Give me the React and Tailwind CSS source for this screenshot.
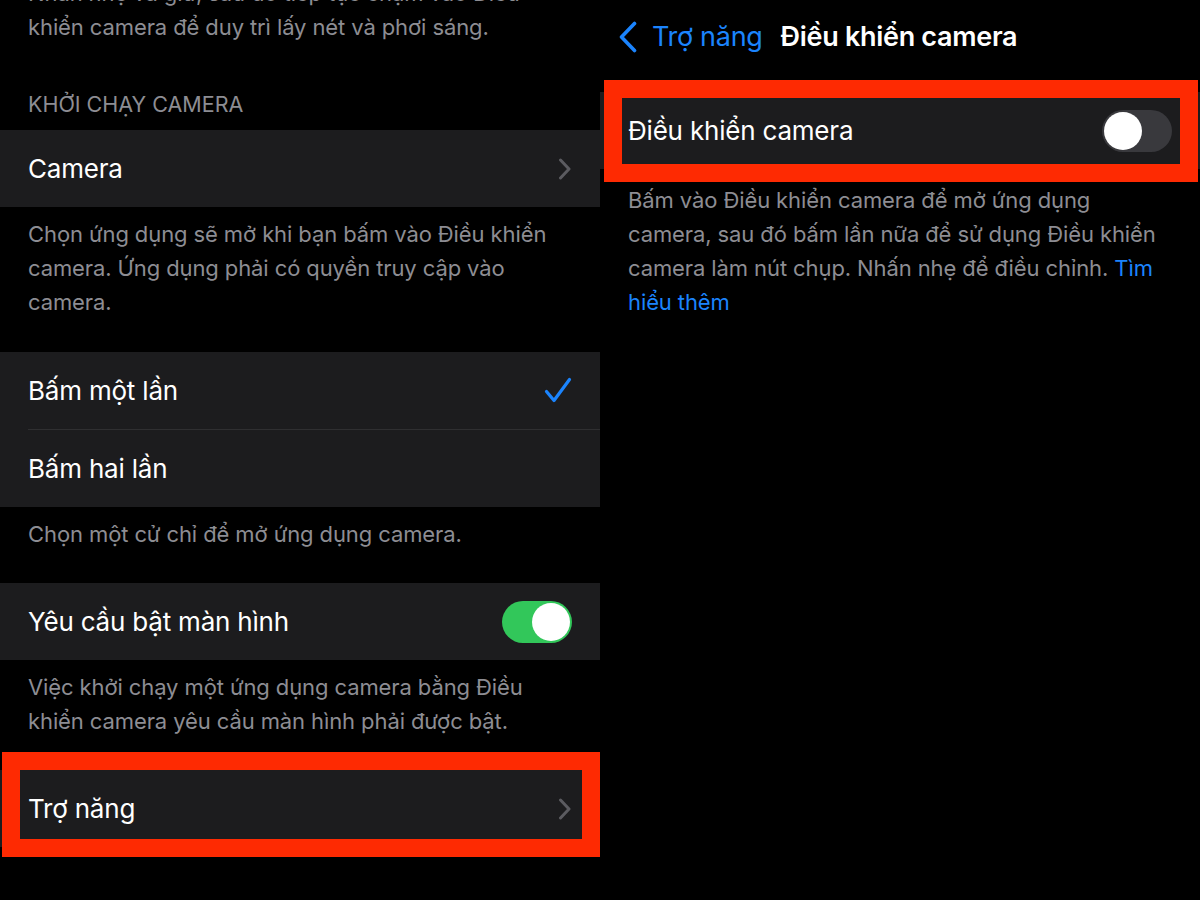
import React from "react";

const font = { fontFamily: "Inter, 'Noto Sans', sans-serif" };

function Chevron() {
  return (
    <svg width="14" height="22" viewBox="0 0 14 22" className="shrink-0">
      <path d="M2.5 2 L11 11 L2.5 20" fill="none" stroke="#5b5b60" strokeWidth="3" strokeLinecap="round" strokeLinejoin="round" />
    </svg>
  );
}

function Check() {
  return (
    <svg width="28" height="27" viewBox="0 0 28 27" className="shrink-0">
      <path d="M2.5 14.5 L10 23.5 L25.5 2.5" fill="none" stroke="#1b84fd" strokeWidth="3.2" strokeLinecap="round" strokeLinejoin="round" />
    </svg>
  );
}

function Toggle({ on }) {
  return (
    <div className={`w-[70px] h-[42px] rounded-full flex items-center px-[2px] ${on ? "bg-[#32c75a] justify-end" : "bg-[#39393d] justify-start"}`}>
      <div className="w-[38px] h-[38px] rounded-full bg-white" />
    </div>
  );
}

function Row({ children, right }) {
  return (
    <div className="h-[77px] bg-[#1c1c1e] flex items-center justify-between pl-[28px] pr-[28px]">
      <span className="text-[26px] text-white tracking-[-0.2px]">{children}</span>
      {right}
    </div>
  );
}

function Footer({ children, className = "" }) {
  return (
    <div className={`px-[28px] text-[22px] leading-[34px] text-[#8d8d93] tracking-[-0.1px] ${className}`}>{children}</div>
  );
}

export default function App() {
  return (
    <div className="w-[1200px] h-[900px] bg-black flex overflow-hidden relative" style={font}>
      {/* Left panel */}
      <div className="w-[600px] flex flex-col relative">
        <Footer className="mt-[-24px]">
          Nhấn nhẹ và giữ, sau đó tiếp tục chạm vào Điều
          <br />
          khiển camera để duy trì lấy nét và phơi sáng.
        </Footer>
        <div className="mt-[47px] px-[28px] text-[21.5px] leading-[26px] text-[#8d8d93]">KHỞI CHẠY CAMERA</div>
        <div className="mt-[13px]">
          <Row right={<Chevron />}>Camera</Row>
        </div>
        <Footer className="mt-[10px]">
          Chọn ứng dụng sẽ mở khi bạn bấm vào Điều khiển
          <br />
          camera. Ứng dụng phải có quyền truy cập vào
          <br />
          camera.
        </Footer>
        <div className="mt-[33px] bg-[#1c1c1e]">
          <Row right={<Check />}>Bấm một lần</Row>
          <div className="ml-[28px] h-[1px] bg-[#2f2f31]" />
          <Row>Bấm hai lần</Row>
        </div>
        <Footer className="mt-[10px]">Chọn một cử chỉ để mở ứng dụng camera.</Footer>
        <div className="mt-[32px]">
          <Row right={<Toggle on />}>Yêu cầu bật màn hình</Row>
        </div>
        <Footer className="mt-[10px]">
          Việc khởi chạy một ứng dụng camera bằng Điều
          <br />
          khiển camera yêu cầu màn hình phải được bật.
        </Footer>
        <div className="mt-[32px]">
          <Row right={<Chevron />}>Trợ năng</Row>
        </div>
        <div className="absolute left-[2px] top-[752px] w-[598px] h-[105px] border-[18px] border-[#fe2a02]" />
      </div>

      {/* Right panel */}
      <div className="w-[600px] flex flex-col relative">
        <div className="h-[74px] flex items-center pl-[18px]">
          <svg width="20" height="32" viewBox="0 0 20 32" className="shrink-0">
            <path d="M16.5 2.5 L3.5 16 L16.5 29.5" fill="none" stroke="#1b84fd" strokeWidth="3.6" strokeLinecap="round" strokeLinejoin="round" />
          </svg>
          <span className="ml-[14px] text-[27px] text-[#1b84fd] tracking-[-0.3px]">Trợ năng</span>
          <span className="ml-[18px] text-[27px] text-white font-semibold tracking-[-0.3px]">Điều khiển camera</span>
        </div>
        <div className="mt-[18px]">
          <Row right={<Toggle on={false} />}>Điều khiển camera</Row>
        </div>
        <Footer className="mt-[14px]">
          Bấm vào Điều khiển camera để mở ứng dụng
          <br />
          camera, sau đó bấm lần nữa để sử dụng Điều khiển
          <br />
          camera làm nút chụp. Nhấn nhẹ để điều chỉnh. <span className="text-[#1b84fd]">Tìm</span>
          <br />
          <span className="text-[#1b84fd]">hiểu thêm</span>
        </Footer>
        <div className="absolute left-[4px] top-[80px] w-[594px] h-[102px] border-[18px] border-[#fe2a02]" />
      </div>
    </div>
  );
}
